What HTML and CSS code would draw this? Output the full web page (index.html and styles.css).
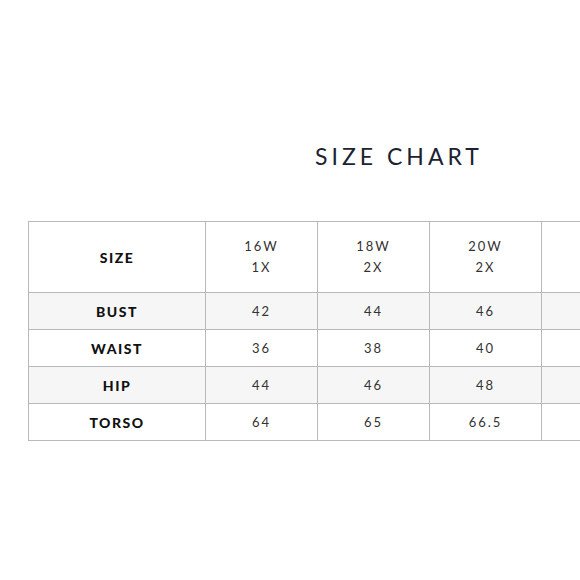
FILE: index.html
```html
<!DOCTYPE html>
<html>
<head>
<meta charset="utf-8">
<link rel="stylesheet" href="styles.css">
</head>
<body>
<div class="page">
  <div class="chart">
    <h1 class="title">SIZE CHART</h1>
    <table class="sizes">
      <tr class="head">
        <th class="label">SIZE</th>
        <td>16W<br>1X</td>
        <td>18W<br>2X</td>
        <td>20W<br>2X</td>
        <td>22W<br>3X</td>
        <td>24W<br>3X</td>
      </tr>
      <tr class="alt">
        <th class="label">BUST</th>
        <td>42</td><td>44</td><td>46</td><td>48</td><td>50</td>
      </tr>
      <tr>
        <th class="label">WAIST</th>
        <td>36</td><td>38</td><td>40</td><td>42</td><td>44</td>
      </tr>
      <tr class="alt">
        <th class="label">HIP</th>
        <td>44</td><td>46</td><td>48</td><td>50</td><td>52</td>
      </tr>
      <tr>
        <th class="label">TORSO</th>
        <td>64</td><td>65</td><td>66.5</td><td>67</td><td>68</td>
      </tr>
    </table>
  </div>
</div>
</body>
</html>
```

FILE: styles.css
```css
html, body {
  margin: 0;
  padding: 0;
  background: #ffffff;
}

.page {
  width: 580px;
  height: 580px;
  overflow: hidden;
}

.chart {
  width: 738px;
  margin-left: 28px;
  padding-top: 142px;
}

.title {
  margin: 0 0 51px 0;
  text-align: center;
  font-family: "Lato", "DejaVu Sans", sans-serif;
  font-weight: 400;
  font-size: 23px;
  line-height: 28px;
  letter-spacing: 4px;
  padding-left: 4px;
  color: #1c2230;
}

.sizes {
  border-collapse: collapse;
  table-layout: fixed;
  width: 738px;
  font-family: "Lato", "DejaVu Sans", sans-serif;
  color: #2a2a2a;
}

.sizes th,
.sizes td {
  border: 1px solid #b9b9b9;
  text-align: center;
  vertical-align: middle;
  padding: 0;
  height: 36px;
}

.sizes td {
  width: 111px;
  font-size: 13px;
  letter-spacing: 2px;
  line-height: 21px;
  font-weight: 400;
  color: #333;
}

.sizes th.label {
  width: 176px;
  font-size: 14px;
  font-weight: 900;
  letter-spacing: 1.5px;
  color: #111;
}

.sizes .head th,
.sizes .head td {
  height: 70px;
}

.sizes .alt th,
.sizes .alt td {
  background: #f6f6f6;
}
```
